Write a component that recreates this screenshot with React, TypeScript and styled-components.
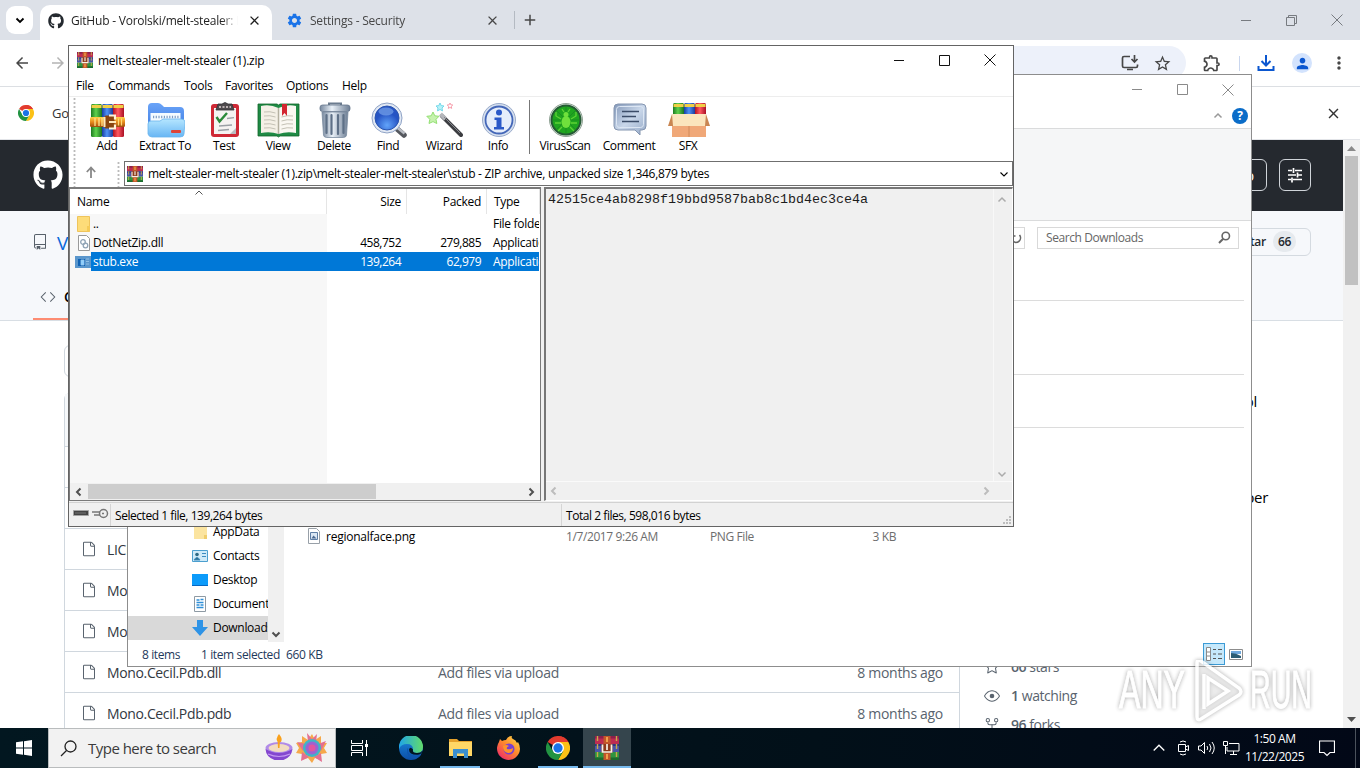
import React from 'react';
import styled, { createGlobalStyle } from 'styled-components';
import { FaGithub } from 'react-icons/fa';
import { GoRepo, GoCode, GoFile, GoStar, GoEye, GoRepoForked } from 'react-icons/go';
import { MdArrowBack, MdArrowForward, MdClose, MdAdd, MdSettings, MdPerson, MdMoreVert, MdStarBorder, MdOutlineExtension } from 'react-icons/md';

const ui = "'Open Sans', 'Noto Sans', sans-serif";

const menu = [
  { label: 'File', width: 32 },
  { label: 'Commands', width: 76 },
  { label: 'Tools', width: 41 },
  { label: 'Favorites', width: 61 },
  { label: 'Options', width: 56 },
  { label: 'Help', width: 40 },
];

const repoFiles = [
  { name: 'LICENSE', note: '', age: '' },
  { name: 'Mono.Cecil', note: '', age: '' },
  { name: 'Mono.Cecil', note: '', age: '' },
  { name: 'Mono.Cecil.Pdb.dll', note: 'Add files via upload', age: '8 months ago' },
  { name: 'Mono.Cecil.Pdb.pdb', note: 'Add files via upload', age: '8 months ago' },
];

const ArchiveIcon = ({ size = 16 }: { size?: number }) => (
  <svg width={size} height={size} viewBox="0 0 24 24">
    <rect x="0" y="0" width="24" height="8" fill="#bd2c52" />
    <rect x="0" y="0" width="24" height="2.5" fill="#8c1f4c" />
    <rect x="0" y="8" width="24" height="8" fill="#4a55a8" />
    <rect x="0" y="8" width="24" height="2" fill="#2f3780" />
    <rect x="0" y="16" width="24" height="8" fill="#2f9440" />
    <rect x="0" y="21.5" width="24" height="2.5" fill="#1c6a2e" />
    <path d="M2.5 0v24M21.5 0v24" stroke="#c9a94a" strokeWidth="1.4" strokeDasharray="5 3" />
    <rect x="8.5" y="0" width="7" height="24" fill="#c2562a" />
    <path d="M12 1v5M12 18v5" stroke="#f0a04c" strokeWidth="2" />
    <rect x="6.500" y="8" width="11" height="9" rx="1" fill="#8d3a1c" />
    <path d="M7.500 8.500v7.500h9V8.500M12 8v6" fill="none" stroke="#f6f1e5" strokeWidth="1.7" />
  </svg>
);

const Books = ({ belt }: { belt?: boolean }) => (
  <g>
    <defs>
      <linearGradient id="bg"><stop offset="0" stopColor="#1d7a21" /><stop offset=".45" stopColor="#5fd14d" /><stop offset="1" stopColor="#1a7420" /></linearGradient>
      <linearGradient id="bb"><stop offset="0" stopColor="#183da3" /><stop offset=".45" stopColor="#4f93f5" /><stop offset="1" stopColor="#1b3b9b" /></linearGradient>
      <linearGradient id="br"><stop offset="0" stopColor="#b3121f" /><stop offset=".45" stopColor="#ff5a62" /><stop offset="1" stopColor="#a80f24" /></linearGradient>
      <linearGradient id="bt" x2="0" y2="1"><stop offset="0" stopColor="#ffd24a" /><stop offset=".5" stopColor="#e78a1c" /><stop offset="1" stopColor="#9d4c0d" /></linearGradient>
    </defs>
    <rect x="1" y="1" width="11" height="33" rx="1.5" fill="url(#bg)" />
    <rect x="12" y="1" width="11" height="33" rx="1.5" fill="url(#bb)" />
    <rect x="23" y="1" width="11" height="33" rx="1.5" fill="url(#br)" />
    <path d="M1.5 3.5h10M12.5 3.5h10M23.5 3.5h10" stroke="#f0cf45" strokeWidth="3" />
    {belt && (
      <g>
        <rect x="0" y="14" width="35" height="10" rx="1.5" fill="url(#bt)" />
        <path d="M5 15v8M9 15v8M12 15v8" stroke="#ffe28a" strokeWidth="1.3" />
        <rect x="14.5" y="12.5" width="10" height="13" rx="1.5" fill="#8a4510" />
        <path d="M19 12.5h6v4M25 21.500v4h-6" fill="none" stroke="#fff3d9" strokeWidth="2.2" />
        <path d="M14.5 14v10M19 19h7" stroke="#ffe9bb" strokeWidth="2" />
        <path d="M28.5 15.5v7M31.5 15.5v7" stroke="#ffd874" strokeWidth="1.2" />
      </g>
    )}
  </g>
);

const AddIcon = () => (
  <svg width="35" height="35" viewBox="0 0 35 35"><Books belt /></svg>
);

const ExtractIcon = () => (
  <svg width="38" height="36" viewBox="0 0 38 36">
    <defs>
      <linearGradient id="fo" x2="0" y2="1"><stop offset="0" stopColor="#b5e6ff" /><stop offset="1" stopColor="#68b6f4" /></linearGradient>
      <linearGradient id="fb" x2="0" y2="1"><stop offset="0" stopColor="#6aa4f8" /><stop offset="1" stopColor="#3a78e0" /></linearGradient>
    </defs>
    <path d="M1 5q0-4 4-4h6q2 0 4 2l2 2h16q4 0 4 4v21H1z" fill="url(#fb)" />
    <path d="M3.500 11h30v13h-30z" fill="#f4fbff" />
    <path d="M6 15h26" stroke="#7f9dc4" strokeWidth="2.500" strokeDasharray="1.200 1.500" />
    <path d="M1 22q0-3 3-3h9l3-2h18q4 0 4 3l-1 12q0 3-4 3H5q-3 0-4-3z" fill="url(#fo)" stroke="#6bb5ee" strokeWidth=".8" />
    <rect x="24" y="28" width="10" height="3" rx="1" fill="#dd4337" />
  </svg>
);

const TestIcon = () => (
  <svg width="30" height="36" viewBox="0 0 30 36">
    <rect x="1" y="2" width="28" height="33" rx="3" fill="#cf2936" />
    <path d="M4 6h22v26H4z" fill="#f5f3f2" />
    <path d="M20 32l6-6v6z" fill="#b9bdc1" />
    <path d="M8 2h4q3-3 6 0h4l2 6H6z" fill="#4e4a4d" stroke="#353337" strokeWidth=".8" />
    <path d="M9 5h12" stroke="#e1d4d5" strokeWidth="1.5" strokeDasharray="2 1.500" />
    <path d="M6.5 15l3 4.5L17 11" fill="none" stroke="#2b8a3a" strokeWidth="2.4" />
    <path d="M17 16.5l7-.8M9 24l13-1M8 28.5l11-1" stroke="#9ba0a6" strokeWidth="1.3" />
  </svg>
);

const ViewIcon = () => (
  <svg width="43" height="36" viewBox="0 0 43 36">
    <path d="M1 2h19l1.5 1L23 2h19v32H23l-1.5 1L20 34H1z" fill="#1f8a45" stroke="#11662a" strokeWidth=".8" />
    <path d="M4 4q9-2 17.5 2v26Q13 29 4 31z" fill="#f4f0e6" />
    <path d="M39 4q-9-2-17.5 2v26q8.500-3 17.5-1z" fill="#faf8f2" />
    <path d="M21.5 6v26" stroke="#b4b0a0" strokeWidth="1.5" />
    <path d="M7 10q6-1 11.5 1M7 14q6-1 11.5 1M7 18q6-1 11.5 1M7 22q6-1 11.5 1M7 26q6-1 11.5 1M36 14q-6-1-11.5 1M36 18q-6-1-11.5 1M36 22q-6-1-11.5 1M36 26q-6-1-11.5 1" fill="none" stroke="#c4c1b5" />
    <path d="M25 2h5v12l-2.500-3L25 14z" fill="#d32630" />
  </svg>
);

const DeleteIcon = () => (
  <svg width="32" height="37" viewBox="0 0 32 37">
    <defs>
      <linearGradient id="tr"><stop offset="0" stopColor="#77889e" /><stop offset=".4" stopColor="#eaf1f8" /><stop offset="1" stopColor="#6d7e94" /></linearGradient>
    </defs>
    <path d="M10 3.500V1.500h12v2" fill="none" stroke="#6b7b8e" strokeWidth="2" />
    <rect x="1" y="3" width="30" height="6.5" rx="2.500" fill="url(#tr)" stroke="#63748a" strokeWidth=".8" />
    <path d="M3 10h26l-1.5 23q0 2-3 2.500h-17q-3-.5-3-2.500z" fill="url(#tr)" stroke="#7a8ba0" strokeWidth=".8" />
    <path d="M7.500 13v18M12.5 13v19M19 13v19M24.5 13v18" stroke="#5e7087" strokeWidth="2.200" strokeLinecap="round" />
  </svg>
);

const FindIcon = () => (
  <svg width="37" height="37" viewBox="0 0 37 37">
    <defs>
      <radialGradient id="le" cx=".5" cy=".8"><stop offset="0" stopColor="#62a4fa" /><stop offset="1" stopColor="#2654c4" /></radialGradient>
    </defs>
    <path d="M26 26l8 7" stroke="#55585e" strokeWidth="5.500" strokeLinecap="round" />
    <path d="M26 24.500l8.500 7" stroke="#b9bdc4" strokeWidth="2.5" />
    <circle cx="17" cy="16" r="15" fill="#e2e9f4" stroke="#8fa3c6" />
    <circle cx="17" cy="16" r="12" fill="url(#le)" stroke="#2b55ae" />
    <ellipse cx="16" cy="9.5" rx="7.500" ry="4" fill="#8db8f4" opacity=".55" />
  </svg>
);

const WizardIcon = () => (
  <svg width="37" height="36" viewBox="0 0 37 36">
    <path d="M16 14l19 19" stroke="#3c3d41" strokeWidth="4" strokeLinecap="round" />
    <path d="M14.5 12l5 5" stroke="#b4b6bb" strokeWidth="4" />
    <path d="M18 15l16 16" stroke="#85888e" strokeWidth="1" />
    <path d="M7 10l1.800 3.800 4.200.5-3 3 .8 4.200L7 19.600l-4 1.900.8-4.200-3-3 4.400-.5z" fill="#c6f2ae" stroke="#93e073" />
    <path d="M14 1l1.200 2.600 2.800.4-2 2 .5 2.900L14 7.500l-2.500 1.400.5-2.900-2-2 2.800-.4z" fill="#b8f2f8" stroke="#74d8ea" />
    <path d="M24 1l.8 1.800 2 .2-1.500 1.400.4 2L24 5.400l-1.700 1 .4-2L21.200 3l2-.2z" fill="#fff" stroke="#f593a3" strokeWidth=".9" />
  </svg>
);

const InfoIcon = () => (
  <svg width="36" height="36" viewBox="0 0 36 36">
    <circle cx="18" cy="18" r="16.5" fill="#d6e0ef" stroke="#9aabca" />
    <circle cx="18" cy="18" r="13.5" fill="#e6eefb" stroke="#4467b8" strokeWidth="1.8" />
    <circle cx="18" cy="10.5" r="3" fill="#2b59c8" />
    <path d="M13.5 15.500H20.500v9.500h2.500v2.500H13V25h2.500v-7h-2z" fill="#2b59c8" />
  </svg>
);

const VirusIcon = () => (
  <svg width="36" height="36" viewBox="0 0 36 36">
    <circle cx="18" cy="18" r="16.5" fill="#e3e8e4" stroke="#8fa294" />
    <circle cx="18" cy="18" r="14.500" fill="#1fa51f" stroke="#245a34" strokeWidth="2" />
    <path d="M18 5v26M5 18h26M9 9l18 18M27 9L9 27" stroke="#1b8f20" />
    <ellipse cx="18" cy="20" rx="4.500" ry="6" fill="#6fe03c" />
    <circle cx="18" cy="12.500" r="2.500" fill="#6fe03c" />
    <path d="M13 17l-5-3V10M23 17l5-3V10M13 21H7M23 21h6M14 25l-4 4M22 25l4 4M16 10l-2-3M20 10l2-3" fill="none" stroke="#5fd236" strokeWidth="1.3" />
  </svg>
);

const CommentIcon = () => (
  <svg width="34" height="36" viewBox="0 0 34 36">
    <defs>
      <linearGradient id="co" x2="1" y2="1"><stop offset="0" stopColor="#8398b9" /><stop offset=".5" stopColor="#c9d7ea" /><stop offset="1" stopColor="#94a8c6" /></linearGradient>
    </defs>
    <path d="M5 2h24q4 0 4 4v18q0 4-4 4h-2v5l-5-5H5q-4 0-4-4V6q0-4 4-4z" fill="url(#co)" stroke="#8495b0" />
    <rect x="3.5" y="4.5" width="27" height="21" rx="3" fill="none" stroke="#dce6f3" />
    <path d="M9 9.5h17M9 14.500h14M9 19.5h17" stroke="#3b4c68" strokeWidth="1.6" />
  </svg>
);

const SfxIcon = () => (
  <svg width="42" height="36" viewBox="0 0 42 36">
    <g transform="translate(4 0)"><Books /></g>
    <path d="M4 12h34v13H4z" fill="#fbe5bd" />
    <path d="M4 12L0 24h5zM38 12l4 12h-5z" fill="#c98652" />
    <path d="M4 24h34v11H4z" fill="#f0a878" />
    <path d="M21 24v11" stroke="#d08a5a" />
  </svg>
);

const ChromeIcon = ({ size = 16 }: { size?: number }) => (
  <svg width={size} height={size} viewBox="0 0 48 48">
    <path d="M24 24L3.200 12A24 24 0 0 1 44.800 12z" fill="#e33b2e" />
    <path d="M24 0a24 24 0 0 1 20.800 12H24z" fill="#e33b2e" />
    <path d="M44.800 12A24 24 0 0 1 24 48L34.400 30 24 12z" fill="#fbc116" />
    <path d="M3.200 12A24 24 0 0 0 24 48l10.400-18H13.600z" fill="#229342" />
    <circle cx="24" cy="24" r="12" fill="#fff" />
    <circle cx="24" cy="24" r="9.3" fill="#1a73e8" />
  </svg>
);

const EdgeIcon = () => (
  <svg width="24" height="24" viewBox="0 0 24 24">
    <defs>
      <linearGradient id="e1"><stop offset="0" stopColor="#1fa4e8" /><stop offset="1" stopColor="#62dc6a" /></linearGradient>
      <linearGradient id="e2" x2="0" y2="1"><stop offset="0" stopColor="#1b8be0" /><stop offset="1" stopColor="#0c4fa6" /></linearGradient>
    </defs>
    <circle cx="12" cy="12" r="12" fill="url(#e2)" />
    <path d="M0 11A12 12 0 0 1 24 11q0 6-6.5 6-4.500-.5-3.500-3.500Q14 8 8 8 2 8 0 13z" fill="url(#e1)" />
    <path d="M9 12q-1 8 8 8 3 0 5-1.500Q20 22 16 23.300 7 22 8 13z" fill="#0f55ae" />
    <path d="M14 13.500q-1 3.500 4 3.500 4 0 5.500-2.500-.8 4-4.500 4.200Q10 19 10 13.500 11 10 14 13.500z" fill="#021420" />
    <path d="M22 18.500l2-4v5z" fill="#021420" />
  </svg>
);

const FolderTaskIcon = () => (
  <svg width="23" height="20" viewBox="0 0 23 20">
    <path d="M0 1h8l2 2h13v3H0z" fill="#e5a12b" />
    <path d="M0 4h23v14H0z" fill="#ffd766" />
    <path d="M4 11h15v9h-4v-4.500H8V20H4z" fill="#3b8fd0" />
  </svg>
);

const FirefoxIcon = () => (
  <svg width="24" height="24" viewBox="0 0 24 24">
    <defs>
      <linearGradient id="ff" x1="1" x2=".2" y2="1"><stop offset="0" stopColor="#ffe14d" /><stop offset=".5" stopColor="#ff8a2b" /><stop offset="1" stopColor="#ee2a6b" /></linearGradient>
    </defs>
    <path d="M2 6l1-3 2 2q2-1 4-1 2-4 6-4-1 2 1 3 3 1 4 4l1-1q2 3 2 7A11.500 11.500 0 1 1 2 6z" fill="url(#ff)" />
    <circle cx="12" cy="13" r="5.5" fill="#7a3fd0" />
    <path d="M6 10q3-2 6 0-3 1-2 3 3 1 6-1 0 5-5 5-5-1-5-7z" fill="#ff9428" />
  </svg>
);

const DiyaIcon = () => (
  <svg width="62" height="30" viewBox="0 0 62 30">
    <path d="M13 9q-3-3 1-8 5 6 1 9z" fill="#f9a11d" />
    <ellipse cx="14" cy="15" rx="13.5" ry="6" fill="#b18be8" />
    <ellipse cx="14" cy="15" rx="10.5" ry="4" fill="#f2dcc1" />
    <path d="M12.500 6q1.500-3 2.500 0l-.5 9h-1.500z" fill="#f9a11d" />
    <path d="M.5 16q13.5 8 27 0-1 8-9 11h-9Q1 24 .5 16z" fill="#8447cf" />
    <path d="M3 21q11 5 22 0" fill="none" stroke="#c59bf2" strokeWidth="1.2" />
    <path d="M47 1l3 6 6-4v7h6l-3 5 3 5-6 1v6l-6-2-3 5-4-5-6 2v-6l-6-1 3-5-3-5 6-1V3l6 4z" fill="#f6a94a" />
    <path d="M42 0l5 6 5-5-1 8h-8zM32 9l9 2-3 7zM61 8l-8 3 3 7zM36 28l1-9 7 5zM57 29l-1-9-7 4z" fill="#e46f90" />
    <circle cx="47" cy="15" r="9" fill="#41b4c6" />
    <circle cx="47" cy="15" r="6.5" fill="#9b63d2" />
    <circle cx="47" cy="15" r="3.5" fill="#e055a0" />
  </svg>
);

const Minimize = () => <svg width="11" height="11"><path d="M0 5.5h10" stroke="currentColor" /></svg>;
const Maximize = () => <svg width="11" height="11"><path d="M.5.5h10v10H.5z" fill="none" stroke="currentColor" /></svg>;
const Restore = () => (
  <svg width="11" height="11"><path d="M.5 2.500h8v8h-8zM2.500 2.500v-2h8v8h-2" fill="none" stroke="currentColor" /></svg>
);
const Cross = () => <svg width="12" height="12"><path d="M.5.5l11 11M11.500.5l-11 11" stroke="currentColor" /></svg>;

const Chevron = ({ turn = 0, width = 1.5 }: { turn?: number; width?: number }) => (
  <svg width="10" height="10" viewBox="0 0 10 10">
    <path d="M1.500 3.500L5 7l3.500-3.500" transform={`rotate(${turn} 5 5)`} fill="none" stroke="currentColor" strokeWidth={width} />
  </svg>
);

const tools = [
  { label: 'Add', width: 58, icon: <AddIcon /> },
  { label: 'Extract To', width: 58, icon: <ExtractIcon /> },
  { label: 'Test', width: 60, icon: <TestIcon /> },
  { label: 'View', width: 48, icon: <ViewIcon /> },
  { label: 'Delete', width: 64, icon: <DeleteIcon /> },
  { label: 'Find', width: 44, icon: <FindIcon /> },
  { label: 'Wizard', width: 68, icon: <WizardIcon /> },
  { label: 'Info', width: 40, icon: <InfoIcon /> },
];

const scanTools = [
  { label: 'VirusScan', width: 50, icon: <VirusIcon /> },
  { label: 'Comment', width: 78, icon: <CommentIcon /> },
  { label: 'SFX', width: 40, icon: <SfxIcon /> },
];

const Browser = () => (
  <BrowserWindow>
    <TabStrip>
      <TabSearch><Chevron width={1.8} /></TabSearch>
      <Tab $active>
        <FaGithub size={16} color="#24292f" />
        <TabTitle $width={167}>GitHub - Vorolski/melt-stealer: M</TabTitle>
        <MdClose size={15} />
      </Tab>
      <Tab>
        <MdSettings size={17} color="#1a73e8" />
        <TabTitle $width={166}>Settings - Security</TabTitle>
        <MdClose size={15} />
      </Tab>
      <NewTab><MdAdd size={18} /></NewTab>
      <Grow />
      <Controls $color="#777b80"><Minimize /><Restore /><Cross /></Controls>
    </TabStrip>
    <Toolbar>
      <MdArrowBack size={18} color="#474747" />
      <MdArrowForward size={18} color="#b4b4b4" />
      <AddressBar>
        <svg width="18" height="16" viewBox="0 0 18 16">
          <path d="M9 1.500H3q-1.500 0-1.500 1.500v8q0 1.500 1.500 1.500h12q1.500 0 1.500-1.500V9.500M6 14.500h6M13.500 0v6M10.500 4l3 3 3-3" fill="none" stroke="#474747" strokeWidth="1.7" />
        </svg>
        <MdStarBorder size={19} color="#474747" />
      </AddressBar>
      <ToolbarIcons>
        <MdOutlineExtension size={20} color="#474747" />
        <ToolDivider />
        <svg width="18" height="18" viewBox="0 0 18 18">
          <path d="M9 1v10M4.500 7L9 11.500 13.500 7M1.500 12v4h15v-4" fill="none" stroke="#0b57d0" strokeWidth="2" />
        </svg>
        <Avatar><MdPerson size={17} /></Avatar>
        <MdMoreVert size={20} color="#474747" />
      </ToolbarIcons>
    </Toolbar>
    <InfoBar>
      <ChromeIcon />
      <span>Google</span>
      <Grow />
      <MdClose size={17} />
    </InfoBar>
    <PageArea>
      <Page>
        <SiteHeader>
          <FaGithub size={30} />
          <Grow />
          <HeaderButton $width={76}>Sign up</HeaderButton>
          <HeaderButton $width={32}>
            <svg width="16" height="16" viewBox="0 0 16 16">
              <path d="M1 3.500h4M8 3.500h7M1 8h8M11 8h4M1 12.500h3M6 12.500h9M6.500 1v5M10.500 5.500v5M5 10.500v5" stroke="#fff" strokeWidth="1.7" />
            </svg>
          </HeaderButton>
        </SiteHeader>
        <RepoHeader>
          <RepoTitle>
            <GoRepo size={16} color="#57606a" />
            <RepoOwner>Vorolski</RepoOwner>
            <Grow />
            <StarButton>Star<Counter>66</Counter></StarButton>
          </RepoTitle>
          <RepoTab><GoCode size={16} color="#57606a" />Code</RepoTab>
        </RepoHeader>
        <RepoBody>
          <FileColumn>
            <BranchButton />
            <FileTable>
              <FileHead />
              <FileGap />
              <FileGap />
              {repoFiles.map((file, index) => (
                <RepoRow key={index}>
                  <GoFile size={16} />
                  <RepoName>{file.name}</RepoName>
                  <RepoNote>{file.note}</RepoNote>
                  <RepoAge>{file.age}</RepoAge>
                </RepoRow>
              ))}
            </FileTable>
          </FileColumn>
          <Sidebar>
            <AboutLine $top={44} $right={86}>tool</AboutLine>
            <AboutLine $top={72} $right={75}>number</AboutLine>
            <Stats>
              <Stat><GoStar size={16} /><span><b>66</b> stars</span></Stat>
              <Stat><GoEye size={16} /><span><b>1</b> watching</span></Stat>
              <Stat><GoRepoForked size={16} /><span><b>96</b> forks</span></Stat>
            </Stats>
          </Sidebar>
        </RepoBody>
      </Page>
      <PageScroll>
        <svg width="9" height="5"><path d="M0 5L4.500 0 9 5z" fill="#8a8a8a" /></svg>
        <PageThumb />
        <Grow />
        <svg width="9" height="5"><path d="M0 0l4.500 5L9 0z" fill="#505050" /></svg>
      </PageScroll>
    </PageArea>
  </BrowserWindow>
);

const Explorer = () => (
  <ExplorerWindow>
    <ExplorerTitle>
      <Controls $color="#8a8a8a"><Minimize /><Maximize /><Cross /></Controls>
    </ExplorerTitle>
    <RibbonTabs>
      <Chevron turn={180} />
      <Help>?</Help>
    </RibbonTabs>
    <Ribbon />
    <ExplorerAddress>
      <Refresh>
        <svg width="12" height="12" viewBox="0 0 12 12">
          <path d="M3 2.500A4.500 4.500 0 1 0 9.500 3M2 .5v3.500h3.500" fill="none" stroke="#666" strokeWidth="1.6" />
        </svg>
      </Refresh>
      <SearchField>
        Search Downloads
        <svg width="13" height="13" viewBox="0 0 13 13">
          <circle cx="7.8" cy="5" r="3.7" fill="none" stroke="#666" strokeWidth="1.6" />
          <path d="M5.200 7.800L1 12" stroke="#666" strokeWidth="2" />
        </svg>
      </SearchField>
    </ExplorerAddress>
    <ExplorerBody>
      <NavPane>
        <NavItem>
          <svg width="16" height="16"><path d="M2 0h13v15H2z" fill="#fbe4a0" /><path d="M12 11h3v4h-3z" fill="#f0cd6d" /></svg>
          <span>AppData</span>
        </NavItem>
        <NavItem>
          <svg width="16" height="16">
            <path d="M.5 2.500h15v11H.5z" fill="#cfeaf8" stroke="#4b9fcf" />
            <circle cx="5" cy="6.5" r="1.8" fill="#2c6a86" />
            <path d="M2 12q3-5 6 0zM10 5.500h4M10 8.500h4" fill="#2c6a86" stroke="#3c8cc0" />
          </svg>
          <span>Contacts</span>
        </NavItem>
        <NavItem>
          <svg width="16" height="16"><path d="M0 2h16v12H0z" fill="#0c9bfa" /><path d="M0 13.500h16" stroke="#0768c2" /></svg>
          <span>Desktop</span>
        </NavItem>
        <NavItem>
          <svg width="16" height="16">
            <path d="M2.500.5h11v15h-11z" fill="#fff" stroke="#8e9aa4" />
            <path d="M4.500 4h3M8.500 3.500h3M4.500 6.500h7M4.500 9h3M8.500 9h3M4.500 11.500h7" stroke="#2f8fd8" strokeWidth="1.5" />
          </svg>
          <span>Documents</span>
        </NavItem>
        <NavItem $selected>
          <svg width="16" height="16"><path d="M5 0h6v7h5l-8 9-8-9h5z" fill="#2e93e6" /></svg>
          <span>Downloads</span>
        </NavItem>
      </NavPane>
      <NavScroll><Chevron width={2} /></NavScroll>
      <FilePane>
        <GroupLine $top={51} />
        <GroupLine $top={73} />
        <GroupLine $top={52} />
        <ImageRow>
          <svg width="14" height="16">
            <path d="M1.500.5h8l3 3v12h-11z" fill="#fff" stroke="#98a0a8" />
            <path d="M3.500 4.500h7v7h-7z" fill="#dbe7f3" stroke="#5f7fa6" />
            <path d="M4.500 10.500l2-3 3 3z" fill="#4a6890" />
          </svg>
          <FileCell $width={240} $dark>regionalface.png</FileCell>
          <FileCell $width={144}>1/7/2017 9:26 AM</FileCell>
          <FileCell $width={100}>PNG File</FileCell>
          <FileCell $width={86} $right>3 KB</FileCell>
        </ImageRow>
      </FilePane>
    </ExplorerBody>
    <ExplorerStatus>
      <StatusItem $width={59}>8 items</StatusItem>
      <StatusItem $width={85}>1 item selected</StatusItem>
      <span>660 KB</span>
      <Grow />
      <ViewButton $active>
        <svg width="16" height="14">
          <path d="M.5.5h4v13h-4zM.5 5h4M.5 9h4" fill="#fff" stroke="#8a8a8a" />
          <path d="M7 2.500h3M12 2.500h4M7 7h3M12 7h4M7 11.500h3M12 11.500h4" stroke="#555" />
        </svg>
      </ViewButton>
      <ViewButton>
        <svg width="14" height="11">
          <path d="M.5.5h13v10H.5z" fill="#fff" stroke="#8c8c8c" />
          <path d="M2 2h10v3H2z" fill="#6fa8dc" />
          <path d="M2 4q5 0 10 3v2H2z" fill="#2c5d74" />
        </svg>
      </ViewButton>
    </ExplorerStatus>
  </ExplorerWindow>
);

const Archiver = () => (
  <ArchiverWindow>
    <ArchiverTitle>
      <ArchiveIcon />
      <Caption>melt-stealer-melt-stealer (1).zip</Caption>
      <Grow />
      <Controls $color="#111"><Minimize /><Maximize /><Cross /></Controls>
    </ArchiverTitle>
    <MenuBar>
      {menu.map((item) => (
        <MenuItem key={item.label} $width={item.width}>{item.label}</MenuItem>
      ))}
    </MenuBar>
    <ToolRow>
      <Grip />
      {tools.map((tool) => (
        <Tool key={tool.label} $width={tool.width}>
          <ToolIcon>{tool.icon}</ToolIcon>
          <ToolLabel>{tool.label}</ToolLabel>
        </Tool>
      ))}
      <ToolSeparator />
      {scanTools.map((tool) => (
        <Tool key={tool.label} $width={tool.width}>
          <ToolIcon>{tool.icon}</ToolIcon>
          <ToolLabel>{tool.label}</ToolLabel>
        </Tool>
      ))}
    </ToolRow>
    <PathRow>
      <Grip />
      <UpButton>
        <svg width="10" height="12"><path d="M5 12V1.500M.8 6L5 1.500 9.200 6" fill="none" stroke="#888" strokeWidth="1.8" /></svg>
      </UpButton>
      <Grip />
      <PathBox>
        <ArchiveIcon />
        <PathText>melt-stealer-melt-stealer (1).zip\melt-stealer-melt-stealer\stub - ZIP archive, unpacked size 1,346,879 bytes</PathText>
        <Grow />
        <Chevron width={1.1} />
      </PathBox>
    </PathRow>
    <Panes>
      <ListPane>
        <ListHeader>
          <HeadCell $left>Name<SortMark><Chevron turn={180} width={1} /></SortMark></HeadCell>
          <HeadCell>Size</HeadCell>
          <HeadCell>Packed</HeadCell>
          <HeadCell $left>Type</HeadCell>
        </ListHeader>
        <ListBody>
          <ListRow>
            <NameCell>
              <svg width="14" height="16"><path d="M.5.5h12v15H.5z" fill="#fddc79" stroke="#efc45b" /><path d="M10 10h3v5.500h-3z" fill="#f5cb58" /></svg>
              ..
            </NameCell>
            <NumberCell /><NumberCell />
            <TypeCell>File folder</TypeCell>
          </ListRow>
          <ListRow>
            <NameCell>
              <svg width="14" height="16">
                <path d="M1.500.5h8l3 3v12h-11z" fill="#fff" stroke="#9a9a9a" />
                <circle cx="6" cy="7" r="2.3" fill="none" stroke="#8fa3b5" strokeWidth="1.3" />
                <circle cx="8.5" cy="10.5" r="2.3" fill="none" stroke="#8fa3b5" strokeWidth="1.3" />
              </svg>
              DotNetZip.dll
            </NameCell>
            <NumberCell>458,752</NumberCell>
            <NumberCell>279,885</NumberCell>
            <TypeCell>Application</TypeCell>
          </ListRow>
          <ListRow $selected>
            <ExeCell>
              <svg width="16" height="12">
                <path d="M0 0h16v12H0z" fill="#5a96cc" />
                <path d="M3 3h7v7H3z" fill="#0f62b4" />
                <path d="M6 4h3v5H6zM11 3h3M11 5.500h3M11 8h3" fill="#8ed0ff" stroke="#9dc8ea" strokeWidth=".8" />
              </svg>
              stub.exe
            </ExeCell>
            <NumberCell>139,264</NumberCell>
            <NumberCell>62,979</NumberCell>
            <TypeCell>Application</TypeCell>
          </ListRow>
        </ListBody>
        <ListScroll>
          <Chevron turn={90} width={2} />
          <ListThumb />
          <Grow />
          <Chevron turn={-90} width={2} />
        </ListScroll>
      </ListPane>
      <CommentPane>
        <CommentMain>
          <CommentText>42515ce4ab8298f19bbd9587bab8c1bd4ec3ce4a</CommentText>
          <CommentScrollY><Chevron turn={180} /><Chevron /></CommentScrollY>
        </CommentMain>
        <CommentScrollX><Chevron turn={90} width={2} /><Chevron turn={-90} width={2} /></CommentScrollX>
      </CommentPane>
    </Panes>
    <ArchiverStatus>
      <StatusIcons>
        <svg width="16" height="8"><path d="M.5 1.500h15v5H.5z" fill="#444" stroke="#a4a4a4" /><path d="M2 4h11" stroke="#777" /></svg>
        <svg width="17" height="11">
          <circle cx="11.5" cy="5.5" r="4" fill="#eee" stroke="#777" strokeWidth="1.5" />
          <path d="M0 4h8M2 7h6M10 5.500h2" stroke="#777" strokeWidth="1.6" />
        </svg>
      </StatusIcons>
      <StatusPart $width={451}>Selected 1 file, 139,264 bytes</StatusPart>
      <StatusPart $width={300}>Total 2 files, 598,016 bytes</StatusPart>
      <Grow />
      <Resize width="9" height="9">
        <path d="M6 0h2v2H6zM6 3h2v2H6zM6 6h2v2H6zM3 3h2v2H3zM3 6h2v2H3zM0 6h2v2H0z" fill="#bdbdbd" />
      </Resize>
    </ArchiverStatus>
  </ArchiverWindow>
);

const Watermark = () => (
  <WatermarkLogo width="200" height="66" viewBox="0 0 200 66">
    <text x="3" y="48" textLength="66" lengthAdjust="spacingAndGlyphs">ANY</text>
    <path d="M81 3q0-4 4-2l38 27q4 4 0 7L85 59q-4 2-4-2zM88 14v35M92 18l20 13-20 13z" />
    <text x="134" y="48" textLength="62" lengthAdjust="spacingAndGlyphs">RUN</text>
  </WatermarkLogo>
);

const Taskbar = () => (
  <TaskbarRoot>
    <StartButton>
      <svg width="16" height="16"><path d="M0 2.300l7-1v6.200H0zM8 1.200l8-1.200v7.500H8zM0 8.500h7v6.200l-7-1zM8 8.500h8V16l-8-1.200z" fill="#fff" /></svg>
    </StartButton>
    <TaskSearch>
      <svg width="17" height="17">
        <circle cx="10.5" cy="6.5" r="5.5" fill="none" stroke="#222" strokeWidth="1.3" />
        <path d="M6.500 10.500L1 16" stroke="#222" strokeWidth="1.3" />
      </svg>
      <span>Type here to search</span>
      <DiyaIcon />
    </TaskSearch>
    <TaskButton $width={48}>
      <svg width="18" height="16">
        <path d="M.5 0v3.500h11V0M.5 16v-3.500h11V16M.5 5.500h11v5H.5zM15.500 0v16" fill="none" stroke="#fff" />
        <path d="M14 4h3v3h-3z" fill="#fff" />
      </svg>
    </TaskButton>
    <TaskButton $width={54}><EdgeIcon /></TaskButton>
    <TaskButton $width={44} $open><FolderTaskIcon /></TaskButton>
    <TaskButton $width={54}><FirefoxIcon /></TaskButton>
    <TaskButton $width={44} $open><ChromeIcon size={24} /></TaskButton>
    <TaskButton $width={48} $open $focused><ArchiveIcon size={24} /></TaskButton>
    <Grow />
    <Tray>
      <TrayArrow width="12" height="8"><path d="M.7 6.500L6 1.200l5.300 5.300" fill="none" stroke="#fff" strokeWidth="1.3" /></TrayArrow>
      <svg width="13" height="16">
        <path d="M1.500 4.500h7v7h-7zM8.500 7l3-1.500v5L8.500 9M3 2q3-2 6 0M3 14q3 2 6 0" fill="none" stroke="#fff" />
      </svg>
      <svg width="17" height="14">
        <path d="M.5 5h2.500L6.500 1.500v11L3 9H.5zM9 5q1.500 2 0 4M11.500 3q3 4 0 8M14 1q4.500 6 0 12" fill="none" stroke="#fff" />
      </svg>
      <svg width="17" height="14">
        <path d="M6 2.500h10v7.500H4V6M7 13.500h7M10.500 10v3.500M.5.5h4v4h-4zM2.500 4.500V13" fill="none" stroke="#fff" />
      </svg>
    </Tray>
    <Clock><span>1:50 AM</span><span>11/22/2025</span></Clock>
    <svg width="16" height="17"><path d="M.5 1h15v11.500h-4.500l-3 3-3-3H.5z" fill="none" stroke="#fff" strokeWidth="1.2" /></svg>
    <ShowDesktop />
  </TaskbarRoot>
);

const App = () => {
  return (
    <Desktop>
      <GlobalStyle />
      <Browser />
      <Explorer />
      <Archiver />
      <Watermark />
      <Taskbar />
    </Desktop>
  );
};

const GlobalStyle = createGlobalStyle`
  * {
    box-sizing: border-box;
  }
  body {
    margin: 0;
    overflow: hidden;
    font-family: ${ui};
    font-size: 12px;
    letter-spacing: -0.3px;
    color: #000;
  }
  svg {
    display: block;
    flex: none;
  }
`;

const Desktop = styled.div`
  position: relative;
  display: flex;
  flex-direction: column;
  width: 1360px;
  height: 768px;
  overflow: hidden;
  white-space: nowrap;
`;

const Grow = styled.div`
  flex: 1;
`;

const Controls = styled.div<{ $color: string }>`
  display: flex;
  align-items: center;
  gap: 34px;
  color: ${({ $color }) => $color};
`;

const BrowserWindow = styled.div`
  display: flex;
  flex-direction: column;
  height: 728px;
  background: #fff;
`;

const TabStrip = styled.div`
  display: flex;
  align-items: center;
  height: 40px;
  padding: 0 17px 0 6px;
  background: #dde1e8;
`;

const TabSearch = styled.div`
  display: flex;
  align-items: center;
  justify-content: center;
  width: 27px;
  height: 28px;
  margin-right: 7px;
  border-radius: 9px;
  background: #fff;
`;

const Tab = styled.div<{ $active?: boolean }>`
  display: flex;
  align-items: center;
  gap: 9px;
  width: ${({ $active }) => ($active ? 232 : 236)}px;
  height: 35px;
  margin-top: 5px;
  padding: ${({ $active }) => ($active ? '0 8px 4px 8px' : '0 7px 4px 14px')};
  border-radius: 10px 10px 0 0;
  background: ${({ $active }) => ($active ? '#fff' : 'transparent')};
  color: ${({ $active }) => ($active ? '#1f1f1f' : '#474747')};
  letter-spacing: -0.22px;
`;

const TabTitle = styled.span<{ $width: number }>`
  flex: none;
  width: ${({ $width }) => $width}px;
  margin-left: -2px;
  overflow: hidden;
  mask-image: linear-gradient(90deg, #000 90%, transparent);
`;

const NewTab = styled.div`
  display: flex;
  margin-left: 6px;
  padding-left: 6px;
  border-left: 1px solid #b4bac2;
  color: #474747;
`;

const Toolbar = styled.div`
  display: flex;
  align-items: center;
  height: 47px;
  padding: 0 12px 0 13px;
  gap: 18px;
  border-bottom: 1px solid #dcdfe3;
  background: #fff;
`;

const AddressBar = styled.div`
  display: flex;
  flex: 1;
  align-items: center;
  justify-content: flex-end;
  gap: 14px;
  height: 34px;
  margin-right: -2px;
  padding-right: 14px;
  border-radius: 17px;
  background: #edf1fa;
`;

const ToolbarIcons = styled.div`
  display: flex;
  align-items: center;
  gap: 17px;
  width: 146px;
`;

const ToolDivider = styled.div`
  flex: none;
  width: 1px;
  height: 15px;
  background: #c9d6ee;
`;

const Avatar = styled.div`
  display: flex;
  align-items: center;
  justify-content: center;
  flex: none;
  width: 20px;
  height: 20px;
  border-radius: 50%;
  background: #d3e3fd;
  color: #0b57d0;
`;

const InfoBar = styled.div`
  display: flex;
  align-items: center;
  height: 53px;
  padding: 0 18px;
  gap: 18px;
  border-bottom: 1px solid #e2e4e8;
  font-size: 13px;
  color: #333;
`;

const PageArea = styled.div`
  display: flex;
  flex: 1;
  min-height: 0;
`;

const Page = styled.div`
  flex: 1;
  overflow: hidden;
`;

const PageScroll = styled.div`
  display: flex;
  flex-direction: column;
  align-items: center;
  width: 17px;
  padding: 6px 0 6px;
  background: #f1f1f1;
`;

const PageThumb = styled.div`
  width: 13px;
  height: 129px;
  margin-top: 5px;
  background: #c1c1c1;
`;

const SiteHeader = styled.div`
  display: flex;
  align-items: center;
  gap: 12px;
  height: 71px;
  padding: 0 32px 2px 33px;
  background: #25292f;
  color: #fff;
`;

const HeaderButton = styled.div<{ $width: number }>`
  display: flex;
  align-items: center;
  justify-content: center;
  width: ${({ $width }) => $width}px;
  height: 32px;
  border: 1px solid #d0d4d9;
  border-radius: 6px;
  font-size: 15px;
`;

const RepoHeader = styled.div`
  display: flex;
  flex-direction: column;
  justify-content: space-between;
  height: 110px;
  padding: 14px 32px 0 32px;
  border-bottom: 1px solid #d8dee4;
  background: #f6f8fb;
`;

const RepoTitle = styled.div`
  display: flex;
  align-items: center;
  height: 33px;
`;

const RepoOwner = styled.span`
  margin-left: 9px;
  padding-top: 3px;
  font-size: 19px;
  color: #0969da;
`;

const StarButton = styled.div`
  display: flex;
  align-items: center;
  justify-content: flex-end;
  gap: 7px;
  width: 100px;
  height: 28px;
  padding-right: 14px;
  border: 1px solid #d4dae0;
  border-radius: 6px;
  font-weight: 600;
  color: #24292f;
`;

const Counter = styled.span`
  padding: 2px 5px;
  border-radius: 10px;
  background: #e6eaee;
`;

const RepoTab = styled.div`
  display: flex;
  align-items: center;
  gap: 8px;
  width: 90px;
  height: 48px;
  margin-left: 1px;
  padding: 3px 7px 0;
  border-bottom: 2px solid #fd8c73;
  font-size: 14px;
  font-weight: 600;
`;

const RepoBody = styled.div`
  display: flex;
  padding: 24px 0 0 64px;
  gap: 23px;
`;

const FileColumn = styled.div`
  width: 896px;
`;

const BranchButton = styled.div`
  width: 120px;
  height: 32px;
  border: 1px solid #d0d7de;
  border-radius: 6px;
`;

const FileTable = styled.div`
  margin-top: 16px;
  border: 1px solid #d0d7de;
  border-radius: 6px 6px 0 0;
`;

const FileHead = styled.div`
  height: 53px;
  border-bottom: 1px solid #d0d7de;
  background: #f6f8fa;
`;

const FileGap = styled.div`
  height: 41px;
  border-bottom: 1px solid #d0d7de;
`;

const RepoRow = styled.div`
  display: flex;
  align-items: center;
  height: 41px;
  padding: 0 16px 0 16px;
  border-bottom: 1px solid #d0d7de;
  font-size: 14px;
  color: #59636e;
`;

const RepoName = styled.span`
  width: 331px;
  margin-left: 10px;
  letter-spacing: -0.36px;
  color: #32383f;
`;

const RepoNote = styled.span`
  flex: 1;
`;

const RepoAge = styled.span`
  text-align: right;
`;

const Sidebar = styled.div`
  display: flex;
  flex-direction: column;
  flex: 1;
  height: 420px;
`;

const AboutLine = styled.div<{ $top: number; $right: number }>`
  margin-top: ${({ $top }) => $top}px;
  padding-right: ${({ $right }) => $right}px;
  font-size: 15px;
  line-height: 24px;
  text-align: right;
`;

const Stats = styled.div`
  display: flex;
  flex-direction: column;
  margin-top: 143px;
`;

const Stat = styled.div`
  display: flex;
  align-items: center;
  gap: 11px;
  height: 29px;
  padding-left: 1px;
  font-size: 14px;
  letter-spacing: -0.45px;
  color: #59636e;

  b {
    font-weight: 600;
  }
`;

const ExplorerWindow = styled.div`
  position: absolute;
  left: 127px;
  top: 74px;
  display: flex;
  flex-direction: column;
  width: 1125px;
  height: 593px;
  border: 1px solid #8d8d8d;
  background: #fff;
`;

const ExplorerTitle = styled.div`
  display: flex;
  align-items: center;
  justify-content: flex-end;
  height: 29px;
  padding-right: 17px;
`;

const RibbonTabs = styled.div`
  display: flex;
  align-items: center;
  justify-content: flex-end;
  gap: 9px;
  height: 25px;
  padding-right: 3px;
  border-bottom: 1px solid #dadbdc;
  color: #999;
`;

const Help = styled.div`
  width: 16px;
  height: 16px;
  border-radius: 50%;
  background: #0a6cc8;
  color: #fff;
  font-size: 12px;
  font-weight: 700;
  line-height: 16px;
  text-align: center;
`;

const Ribbon = styled.div`
  height: 92px;
  border-bottom: 1px solid #dadbdc;
  background: #f5f6f7;
`;

const ExplorerAddress = styled.div`
  display: flex;
  justify-content: flex-end;
  gap: 12px;
  height: 28px;
  padding: 6px 12px 0 0;
`;

const Refresh = styled.div`
  display: flex;
  align-items: center;
  justify-content: flex-end;
  width: 300px;
  height: 22px;
  padding-right: 2px;
  border: 1px solid #d9d9d9;
`;

const SearchField = styled.div`
  display: flex;
  align-items: center;
  justify-content: space-between;
  width: 202px;
  height: 22px;
  padding: 0 7px 1px 8px;
  border: 1px solid #d9d9d9;
  letter-spacing: -0.42px;
  color: #666;
`;

const ExplorerBody = styled.div`
  display: flex;
  flex: 1;
  min-height: 0;
`;

const NavPane = styled.div`
  display: flex;
  flex-direction: column;
  justify-content: flex-end;
  width: 140px;
  padding-bottom: 2px;
  overflow: hidden;
`;

const NavItem = styled.div<{ $selected?: boolean }>`
  display: flex;
  align-items: center;
  gap: 5px;
  height: 24px;
  padding-left: 64px;
  background: ${({ $selected }) => ($selected ? '#d9d9d9' : 'transparent')};

  span {
    padding-bottom: 2px;
  }
`;

const NavScroll = styled.div`
  display: flex;
  align-items: flex-end;
  justify-content: center;
  width: 16px;
  padding-bottom: 3px;
  background: #f0f0f0;
  color: #505050;
`;

const FilePane = styled.div`
  flex: 1;
  padding-right: 7px;
`;

const GroupLine = styled.div<{ $top: number }>`
  margin-top: ${({ $top }) => $top}px;
  border-bottom: 1px solid #dcdcdc;
`;

const ImageRow = styled.div`
  display: flex;
  align-items: center;
  height: 22px;
  margin-top: 97px;
  padding-left: 23px;
`;

const FileCell = styled.span<{ $width: number; $dark?: boolean; $right?: boolean }>`
  width: ${({ $width }) => $width}px;
  padding-left: ${({ $dark }) => ($dark ? 5 : 0)}px;
  margin-right: ${({ $dark }) => ($dark ? 5 : 0)}px;
  text-align: ${({ $right }) => ($right ? 'right' : 'left')};
  letter-spacing: ${({ $dark }) => ($dark ? -0.25 : -0.4)}px;
  color: ${({ $dark }) => ($dark ? '#000' : '#6d6d6d')};
`;

const ExplorerStatus = styled.div`
  display: flex;
  align-items: center;
  height: 24px;
  padding: 0 4px 0 14px;
  letter-spacing: -0.38px;
  color: #1e395b;
`;

const StatusItem = styled.span<{ $width: number }>`
  width: ${({ $width }) => $width}px;
`;

const ViewButton = styled.div<{ $active?: boolean }>`
  display: flex;
  align-items: center;
  justify-content: center;
  width: 22px;
  height: 22px;
  border: 1px solid ${({ $active }) => ($active ? '#3c9bd6' : 'transparent')};
  background: ${({ $active }) => ($active ? '#c5e8fb' : 'transparent')};
`;

const ArchiverWindow = styled.div`
  position: absolute;
  left: 68px;
  top: 45px;
  display: flex;
  flex-direction: column;
  width: 946px;
  height: 482px;
  border: 1px solid #646464;
  background: #fff;
`;

const ArchiverTitle = styled.div`
  display: flex;
  align-items: center;
  height: 30px;
  padding: 0 17px 2px 8px;
`;

const Caption = styled.span`
  margin-left: 5px;
  letter-spacing: -0.24px;
`;

const MenuBar = styled.div`
  display: flex;
  align-items: center;
  height: 21px;
  padding: 0 0 2px 7px;
  border-bottom: 1px solid #ededed;
`;

const MenuItem = styled.span<{ $width: number }>`
  width: ${({ $width }) => $width}px;
`;

const ToolRow = styled.div`
  display: flex;
  height: 64px;
  padding-left: 4px;
`;

const Grip = styled.div`
  width: 5px;
  background: radial-gradient(circle, #bbb 1px, transparent 1.2px) 0 0 / 3px 4px repeat-y;
`;

const Tool = styled.div<{ $width: number }>`
  display: flex;
  flex-direction: column;
  align-items: center;
  width: ${({ $width }) => $width}px;
  padding-top: 5px;
`;

const ToolIcon = styled.div`
  display: flex;
  align-items: center;
  height: 36px;
  padding-left: 1px;
`;

const ToolLabel = styled.span`
  line-height: 16px;
  letter-spacing: -0.38px;
`;

const ToolSeparator = styled.div`
  width: 1px;
  height: 54px;
  margin: 3px 10px 0 11px;
  background: #777;
`;

const PathRow = styled.div`
  display: flex;
  height: 26px;
  padding-left: 4px;
`;

const UpButton = styled.div`
  display: flex;
  justify-content: center;
  width: 39px;
  padding: 5px 13px 0 0;
`;

const PathBox = styled.div`
  display: flex;
  align-items: center;
  flex: 1;
  height: 25px;
  margin-left: 2px;
  padding: 0 3px 0 2px;
  border: 1px solid #6f6f6f;
`;

const PathText = styled.span`
  margin-left: 5px;
  letter-spacing: -0.29px;
`;

const Panes = styled.div`
  display: flex;
  gap: 3px;
  height: 315px;
  background: #f0f0f0;
`;

const ListPane = styled.div`
  display: flex;
  flex-direction: column;
  width: 472px;
  height: 314px;
  border: 1px solid #7a7a7a;
  border-top-width: 2px;
  background: #fff;
  overflow: hidden;
`;

const ListHeader = styled.div`
  display: grid;
  grid-template-columns: 257px 80px 80px 1fr;
  height: 25px;
`;

const HeadCell = styled.div<{ $left?: boolean }>`
  display: flex;
  position: relative;
  align-items: center;
  justify-content: ${({ $left }) => ($left ? 'flex-start' : 'flex-end')};
  padding: 0 5px 1px 7px;
  border-right: 1px solid #e5e5e5;
`;

const SortMark = styled.span`
  position: absolute;
  top: -1px;
  left: 124px;
  color: #555;
`;

const ListBody = styled.div`
  flex: 1;
  padding-right: 1px;
  background: linear-gradient(90deg, #f7f7f7 257px, #fff 257px);
`;

const ListRow = styled.div<{ $selected?: boolean }>`
  display: grid;
  grid-template-columns: 257px 80px 80px minmax(0, 1fr);
  align-items: center;
  height: 19px;
  line-height: 16px;
  color: ${({ $selected }) => ($selected ? '#fff' : '#000')};
  background: ${({ $selected }) => ($selected ? 'linear-gradient(90deg, transparent 21px, #0078d7 21px)' : 'transparent')};
`;

const NameCell = styled.div`
  display: flex;
  align-items: center;
  gap: 2px;
  padding-left: 7px;
`;

const ExeCell = styled(NameCell)`
  padding-left: 5px;
`;

const NumberCell = styled.div`
  padding-right: 6px;
  letter-spacing: -0.5px;
  text-align: right;
`;

const TypeCell = styled.div`
  padding-left: 6px;
  overflow: hidden;
`;

const ListScroll = styled.div`
  display: flex;
  align-items: center;
  height: 17px;
  padding: 0 4px;
  background: #f0f0f0;
  color: #505050;
`;

const ListThumb = styled.div`
  width: 288px;
  height: 15px;
  margin-left: 4px;
  background: #cdcdcd;
`;

const CommentPane = styled.div`
  display: flex;
  flex-direction: column;
  flex: 1;
  height: 314px;
  border: 1px solid #fff;
  border-top: 2px solid #777;
  border-left: 2px solid #777;
  background: #f0f0f0;
`;

const CommentMain = styled.div`
  display: flex;
  flex: 1;
  border-bottom: 1px solid #fafafa;
`;

const CommentText = styled.div`
  flex: 1;
  padding: 3px 2px;
  font-family: 'Liberation Mono', monospace;
  font-size: 13.333px;
  line-height: 16px;
  letter-spacing: 0;
  color: #1c1c1c;
`;

const CommentScrollY = styled.div`
  display: flex;
  flex-direction: column;
  justify-content: space-between;
  align-items: center;
  width: 19px;
  padding: 6px 3px 2px 0;
  border-left: 1px solid #f8f8f8;
  color: #ababab;
`;

const CommentScrollX = styled.div`
  display: flex;
  align-items: center;
  justify-content: space-between;
  height: 18px;
  padding: 0 21px 0 3px;
  color: #bdbdbd;
`;

const ArchiverStatus = styled.div`
  display: flex;
  align-items: center;
  flex: 1;
  border-top: 1px solid #d2d2d2;
  background: #f0f0f0;
`;

const StatusIcons = styled.div`
  display: flex;
  align-items: center;
  gap: 3px;
  width: 41px;
  padding: 0 0 3px 4px;
`;

const StatusPart = styled.div<{ $width: number }>`
  width: ${({ $width }) => $width}px;
  height: 22px;
  padding-left: 4px;
  border-left: 1px solid #d5d5d5;
  line-height: 24px;
  letter-spacing: -0.45px;
`;

const Resize = styled.svg`
  align-self: flex-end;
  margin: 0 1px 1px 0;
`;

const WatermarkLogo = styled.svg`
  position: absolute;
  left: 1116px;
  top: 660px;
  filter: drop-shadow(0 0 2px rgba(0, 0, 0, 0.4));
  opacity: 0.85;

  text {
    fill: #fff;
    stroke: #fff;
    stroke-width: 1px;
    font-family: 'Liberation Sans Narrow', 'Liberation Sans', sans-serif;
    font-size: 54px;
    letter-spacing: 0;
  }

  path {
    fill: rgba(255, 255, 255, 0.35);
    stroke: #fff;
    stroke-width: 3.5;
  }
`;

const TaskbarRoot = styled.div`
  display: flex;
  align-items: center;
  height: 40px;
  background: linear-gradient(90deg, #021720 0%, #021019 60%, #020817 100%);
  color: #fff;
`;

const StartButton = styled.div`
  display: flex;
  justify-content: center;
  width: 48px;
`;

const TaskSearch = styled.div`
  display: flex;
  align-items: center;
  width: 288px;
  height: 40px;
  padding: 0 8px 0 11px;
  border: 1px solid #b9bcbd;
  background: #f2f2f2;
  color: #3b3b3b;
  font-size: 15px;
  letter-spacing: -0.52px;

  span {
    flex: 1;
    margin-left: 11px;
  }
`;

const TaskButton = styled.div<{ $width: number; $open?: boolean; $focused?: boolean }>`
  display: flex;
  align-items: center;
  justify-content: center;
  width: ${({ $width, $focused }) => ($focused ? $width : $width - 4)}px;
  height: 40px;
  margin: ${({ $focused }) => ($focused ? '0 0 0 3px' : '0 2px')};
  border-top: 2px solid ${({ $focused }) => ($focused ? '#35454d' : 'transparent')};
  border-bottom: 2px solid ${({ $open }) => ($open ? '#76b9ed' : 'transparent')};
  background: ${({ $focused }) => ($focused ? '#35454d' : 'transparent')};
`;

const Tray = styled.div`
  display: flex;
  align-items: center;
  gap: 8px;
`;

const TrayArrow = styled.svg`
  margin-right: 4px;
`;

const Clock = styled.div`
  display: flex;
  flex-direction: column;
  align-items: center;
  width: 71px;
  margin: 0 9px 0 -1px;
  line-height: 18px;
  letter-spacing: -0.45px;
`;

const ShowDesktop = styled.div`
  width: 5px;
  height: 40px;
  margin-left: 20px;
  border-left: 1px solid #4b525c;
`;

export default App;
